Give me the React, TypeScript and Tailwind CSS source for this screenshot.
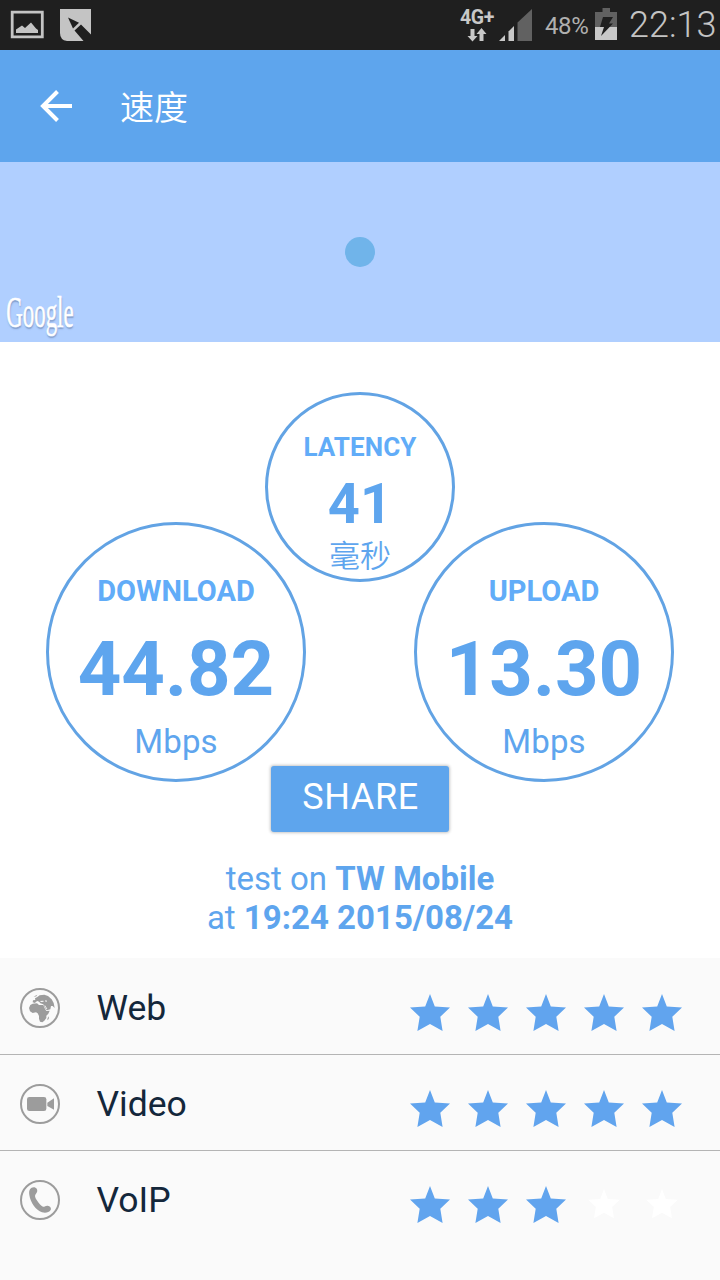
import React from "react";

const STAR = "M20 0 L24.8 12.6 L40 13.5 L30.3 22.7 L32.6 37 L20 30 L7.4 37 L9.7 22.7 L0 13.5 L15.2 12.6 Z";

function StatusBar() {
  return (
    <div className="flex h-[50px] items-start bg-[#1f1f1f] text-[#c8c8c8]">
      <svg className="ml-[10px] mt-[10px] shrink-0" width="34" height="29" viewBox="0 0 34 29">
        <path d="M2.2 2.2H32.3V26.8H2.2Z" fill="none" stroke="#c4c4c4" strokeWidth="2.8" />
        <path d="M6 23V19.6L12 15.4L15 18L21 12.4L26 18.4L28 20V23Z" fill="#c4c4c4" />
      </svg>
      <svg className="ml-[16px] mt-[9px] shrink-0" width="31" height="32" viewBox="0 0 31 32">
        <path d="M0 0H31V25.5L21 15.5L14.5 21.5L23.5 32H7Q0 31 0 24Z" fill="#c4c4c4" />
        <path d="M8 8.5L19 13.7L13 19.6Z" fill="#1f1f1f" />
      </svg>
      <div className="ml-auto flex h-full items-start">
        <div className="flex w-[36px] flex-col items-center pt-[8px]">
          <span className="text-[19.5px] font-bold leading-[19px] tracking-[-0.3px]">4G+</span>
          <svg className="mt-[1px]" width="20" height="14" viewBox="0 0 20 14">
            <path d="M3.5 1H7.5V8H10.5L5.5 13.5L0.5 8H3.5Z" fill="#c8c8c8" />
            <path d="M12.5 13V6H9.5L14.5 0L19.5 6H16.5V13Z" fill="#c8c8c8" />
          </svg>
        </div>
        <svg className="ml-[4px] mt-[8px]" width="33" height="34" viewBox="0 0 33 34">
          <path d="M0 33L6 27V33Z" fill="#c8c8c8" />
          <path d="M9.5 33V23.5L15 18V33Z" fill="#c8c8c8" />
          <path d="M18.5 33V14.5L33 1V33Z" fill="#616161" />
        </svg>
        <span className="ml-[13px] mt-[11px] w-[44px] whitespace-nowrap text-[24px] leading-[30px] tracking-[-0.4px] text-[#b0b0b0]">48%</span>
        <svg className="ml-[6px] mt-[8px]" width="22" height="32" viewBox="0 0 22 32">
          <path d="M7.5 0H15V4H22V19H0V4H7.5Z" fill="#616161" />
          <path d="M0 19H22V32H0Z" fill="#c8c8c8" />
          <path d="M8 9H18L14 15.5H18L6 28L9 19H5Z" fill="#1f1f1f" />
        </svg>
        <span className="ml-[12px] mt-[4px] w-[91px] whitespace-nowrap text-[36px] font-light leading-[42px] text-[#c4c4c4]">22:13</span>
      </div>
    </div>
  );
}

function Gauge({ label, value }: { label: string; value: string }) {
  return (
    <div className="mt-[130px] flex h-[260px] w-[260px] shrink-0 flex-col items-center rounded-full border-[3px] border-[#62a3e4] pt-[46px]">
      <span className="text-[29px] font-bold leading-[41px] text-[#61acf8]">{label}</span>
      <span className="mt-[17px] text-[76px] font-bold leading-[80px]">{value}</span>
      <span className="mt-[13px] text-[33px] leading-[40px] tracking-[0.2px]">Mbps</span>
    </div>
  );
}

function WebIcon() {
  return (
    <svg width="40" height="40" viewBox="0 0 120 120" fill="#9c9c9c">
      <circle cx="60" cy="60" r="57" fill="none" stroke="#9c9c9c" strokeWidth="6" />
      <path d="M27 60L31 51L38 47L51 46L57 51L70 51L74 61L79 69L89 68L85 77L79 83L79 90L73 98L67 103L60 101L57 92L57 84L53 76L48 73L38 75L30 70Z" />
      <path d="M38 43L39 37L46 36L45 31L52 27L59 22L73 20L84 24L95 34L101 45L104 60L98 54L93 54L91 64L80 67L74 58L70 49L61 46L58 42L53 39L48 41L45 45Z" />
      <path d="M41 27L46 23L52 20L49 25ZM83 90L87 85L86 93L82 97Z" />
      <path d="M59 39L70 38L71 41L64 42ZM76 37L79 36L80 42L77 42ZM75 52L82 63L80 64L73 53Z" fill="#fafafa" />
    </svg>
  );
}

function VideoIcon() {
  return (
    <svg width="40" height="40" viewBox="0 0 120 120" fill="#9c9c9c">
      <circle cx="60" cy="60" r="57" fill="none" stroke="#9c9c9c" strokeWidth="6" />
      <rect x="21" y="39" width="58" height="42" rx="7" />
      <path d="M82 56L102 43V77L82 66Z" />
    </svg>
  );
}

function PhoneIcon() {
  return (
    <svg width="40" height="40" viewBox="0 0 120 120" fill="#9c9c9c">
      <circle cx="60" cy="60" r="57" fill="none" stroke="#9c9c9c" strokeWidth="6" />
      <path d="M30 28C34 21 44 19 49 25C53 30 53 36 48 41C43 46 45 52 50 60C56 70 63 77 69 80C73 82 76 76 83 77C90 78 95 84 92 90C87 98 76 100 66 97C48 91 31 67 28 45C27 38 27 33 30 28Z" />
    </svg>
  );
}

function Row({ icon, label, stars }: { icon: React.ReactNode; label: string; stars: number }) {
  return (
    <div className="flex h-[96px] items-center border-b border-[#b4b4b4] pl-[20px] pr-[38px] pt-[3px] last:border-transparent">
      {icon}
      <span className="ml-[36.5px] text-[35.5px] leading-[44px] text-[#14273b]">{label}</span>
      <div className="ml-auto flex gap-[18px] pt-[9px]">
        {[0, 1, 2, 3, 4].map((i) => (
          <svg key={i} width="40" height="37" viewBox="0 0 40 37">
            {i < stars ? (
              <path d={STAR} fill="#61a4ee" />
            ) : (
              <path d={STAR} fill="#ffffff" transform="translate(4.2 3) scale(0.79)" />
            )}
          </svg>
        ))}
      </div>
    </div>
  );
}

export default function App() {
  return (
    <div className="flex h-[1280px] w-[720px] flex-col overflow-hidden bg-white font-[Roboto,'Noto_Sans_CJK_SC',sans-serif] text-[#5ea5ee]">
      <StatusBar />
      <header className="flex h-[112px] items-center bg-[#5ea5ed] text-white">
        <svg className="ml-[40px]" width="32" height="32" viewBox="0 0 32 32">
          <path d="M32 16H3M17.5 1.5L3 16L17.5 30.5" fill="none" stroke="#fff" strokeWidth="4" />
        </svg>
        <h1 className="ml-[48px] font-['Noto_Sans_CJK_SC',sans-serif] text-[34px] font-[350] leading-[48px]">速度</h1>
      </header>
      <div className="grid h-[180px] grid-cols-[345px_30px_345px] items-center bg-[#b0cfff]">
        <span className="origin-left scale-x-[0.52] self-end pb-[5px] pl-[12px] font-['Liberation_Serif',serif] text-[44px] leading-[48px] text-white [-webkit-text-stroke:0.6px_#ffffff] [text-shadow:1px_2px_2px_rgba(70,90,130,0.45)]">
          Google
        </span>
        <span className="h-[30px] w-[30px] rounded-full bg-[#70b4ea]" />
      </div>
      <main className="flex h-[616px] flex-col items-center pt-[50px]">
        <div className="flex w-full pl-[46px]">
          <Gauge label="DOWNLOAD" value="44.82" />
          <div className="mx-[-41px] flex h-[190px] w-[190px] shrink-0 flex-col items-center rounded-full border-[3px] border-[#62a3e4] pt-[37px]">
            <span className="text-[26px] font-bold leading-[30px] tracking-[0.1px] text-[#61acf8]">LATENCY</span>
            <span className="mt-[12px] text-[56px] font-bold leading-[60px]">41</span>
            <span className="font-['Noto_Sans_CJK_SC',sans-serif] text-[31px] font-[350] leading-[40px]">毫秒</span>
          </div>
          <Gauge label="UPLOAD" value="13.30" />
        </div>
        <button className="mt-[-16px] flex h-[66px] w-[178px] shrink-0 justify-center rounded-[3px] bg-[#5ea5ed] pl-px text-[36px] leading-[63px] tracking-[0.6px] text-white shadow-[0_0_3px_1px_rgba(0,0,0,0.22)]">
          SHARE
        </button>
        <p className="mt-[27px] text-center text-[33px] leading-[39px]">
          test on <b>TW Mobile</b>
          <br />
          at <b>19:24 2015/08/24</b>
        </p>
      </main>
      <section className="flex-1 bg-[#fafafa] pt-px">
        <Row icon={<WebIcon />} label="Web" stars={5} />
        <Row icon={<VideoIcon />} label="Video" stars={5} />
        <Row icon={<PhoneIcon />} label="VoIP" stars={3} />
      </section>
    </div>
  );
}
